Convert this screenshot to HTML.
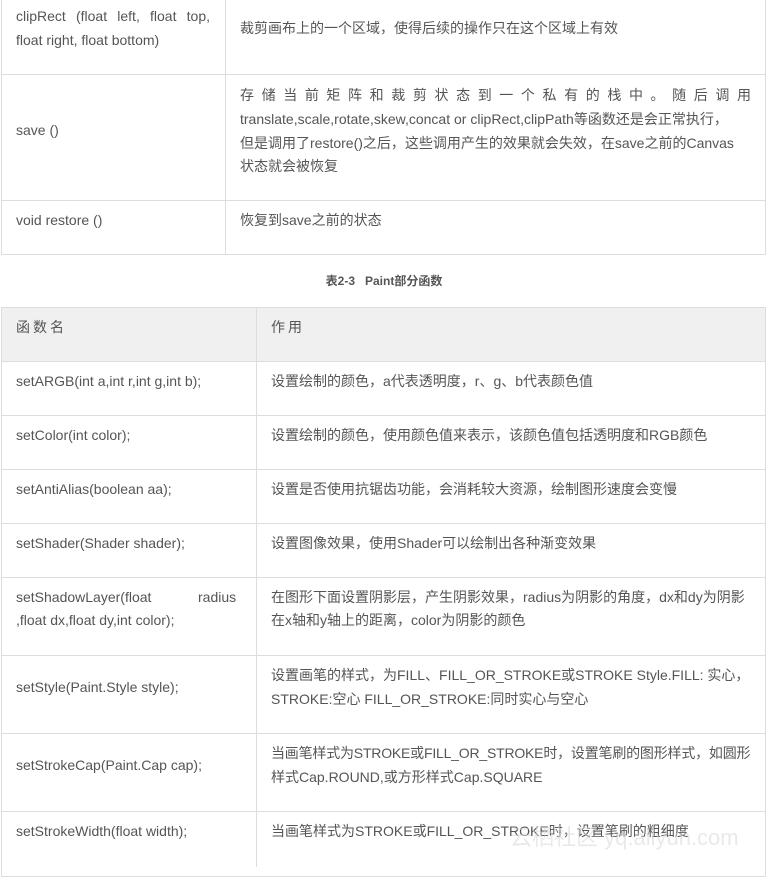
<!DOCTYPE html>
<html><head><meta charset="utf-8"><style>
body{margin:0;width:768px;height:865px;overflow:hidden;background:#fff;font-family:"Liberation Sans","Noto Sans CJK SC",sans-serif;font-size:14px;color:#555;position:relative}
.b{position:absolute;border:1px solid #ddd;box-sizing:border-box}
.h{position:absolute;height:1px;background:#ddd}
.v{position:absolute;width:1px;background:#ddd}
.t{position:absolute;line-height:24px;white-space:nowrap}
</style></head><body>
<div class="b" style="left:1px;top:-5px;width:765px;height:260px"></div>
<div class="v" style="left:225px;top:0;height:254px"></div>
<div class="h" style="left:1px;top:74px;width:765px"></div>
<div class="h" style="left:1px;top:200px;width:765px"></div>
<div class="t" style="left:16px;top:4px;width:194px;text-align:justify;text-align-last:justify;white-space:normal">clipRect (float left, float top,</div>
<div class="t" style="left:16px;top:28px">float right, float bottom)</div>
<div class="t" style="left:240px;top:16px">裁剪画布上的一个区域，使得后续的操作只在这个区域上有效</div>
<div class="t" style="left:16px;top:118px">save ()</div>
<div class="t" style="left:240px;top:83px;width:511px;white-space:normal;text-align:justify;text-align-last:justify">存 储 当 前 矩 阵 和 裁 剪 状 态 到 一 个 私 有 的 栈 中 。 随 后 调 用</div>
<div class="t" style="left:240px;top:107px">translate,scale,rotate,skew,concat or clipRect,clipPath等函数还是会正常执行，</div>
<div class="t" style="left:240px;top:131px">但是调用了restore()之后，这些调用产生的效果就会失效，在save之前的Canvas</div>
<div class="t" style="left:240px;top:154px">状态就会被恢复</div>
<div class="t" style="left:16px;top:208px">void restore ()</div>
<div class="t" style="left:240px;top:208px">恢复到save之前的状态</div>
<div class="t" style="left:0;width:768px;text-align:center;top:269px;font-weight:bold;font-size:12px">表2-3&nbsp;&nbsp;&nbsp;Paint部分函数</div>
<div class="b" style="left:1px;top:307px;width:765px;height:570px"></div>
<div style="position:absolute;left:2px;top:308px;width:763px;height:53px;background:#f0f0f0"></div>
<div class="v" style="left:256px;top:307px;height:560px"></div>
<div class="h" style="left:1px;top:361px;width:765px"></div>
<div class="h" style="left:1px;top:415px;width:765px"></div>
<div class="h" style="left:1px;top:469px;width:765px"></div>
<div class="h" style="left:1px;top:523px;width:765px"></div>
<div class="h" style="left:1px;top:577px;width:765px"></div>
<div class="h" style="left:1px;top:655px;width:765px"></div>
<div class="h" style="left:1px;top:733px;width:765px"></div>
<div class="h" style="left:1px;top:811px;width:765px"></div>
<div class="t" style="left:16px;top:315px;letter-spacing:3px">函数名</div>
<div class="t" style="left:271px;top:315px;letter-spacing:3px">作用</div>
<div class="t" style="left:16px;top:369px">setARGB(int a,int r,int g,int b);</div>
<div class="t" style="left:271px;top:369px">设置绘制的颜色，a代表透明度，r、g、b代表颜色值</div>
<div class="t" style="left:16px;top:423px">setColor(int color);</div>
<div class="t" style="left:271px;top:423px">设置绘制的颜色，使用颜色值来表示，该颜色值包括透明度和RGB颜色</div>
<div class="t" style="left:16px;top:477px">setAntiAlias(boolean aa);</div>
<div class="t" style="left:271px;top:477px">设置是否使用抗锯齿功能，会消耗较大资源，绘制图形速度会变慢</div>
<div class="t" style="left:16px;top:531px">setShader(Shader shader);</div>
<div class="t" style="left:271px;top:531px">设置图像效果，使用Shader可以绘制出各种渐变效果</div>
<div class="t" style="left:16px;top:585px">setShadowLayer(float</div>
<div class="t" style="left:198px;top:585px">radius</div>
<div class="t" style="left:16px;top:608px">,float dx,float dy,int color);</div>
<div class="t" style="left:271px;top:585px">在图形下面设置阴影层，产生阴影效果，radius为阴影的角度，dx和dy为阴影</div>
<div class="t" style="left:271px;top:608px">在x轴和y轴上的距离，color为阴影的颜色</div>
<div class="t" style="left:16px;top:675px">setStyle(Paint.Style style);</div>
<div class="t" style="left:271px;top:663px">设置画笔的样式，为FILL、FILL_OR_STROKE或STROKE Style.FILL: 实心，</div>
<div class="t" style="left:271px;top:687px">STROKE:空心 FILL_OR_STROKE:同时实心与空心</div>
<div class="t" style="left:16px;top:753px">setStrokeCap(Paint.Cap cap);</div>
<div class="t" style="left:271px;top:741px;letter-spacing:-0.2px">当画笔样式为STROKE或FILL_OR_STROKE时，设置笔刷的图形样式，如圆形</div>
<div class="t" style="left:271px;top:765px">样式Cap.ROUND,或方形样式Cap.SQUARE</div>
<div class="t" style="left:16px;top:819px">setStrokeWidth(float width);</div>
<div class="t" style="left:271px;top:819px">当画笔样式为STROKE或FILL_OR_STROKE时，设置笔刷的粗细度</div>
<div class="t" style="left:510px;top:826px;font-size:22px;color:rgba(215,215,215,0.55)">云栖社区 yq.aliyun.com</div>
</body></html>
